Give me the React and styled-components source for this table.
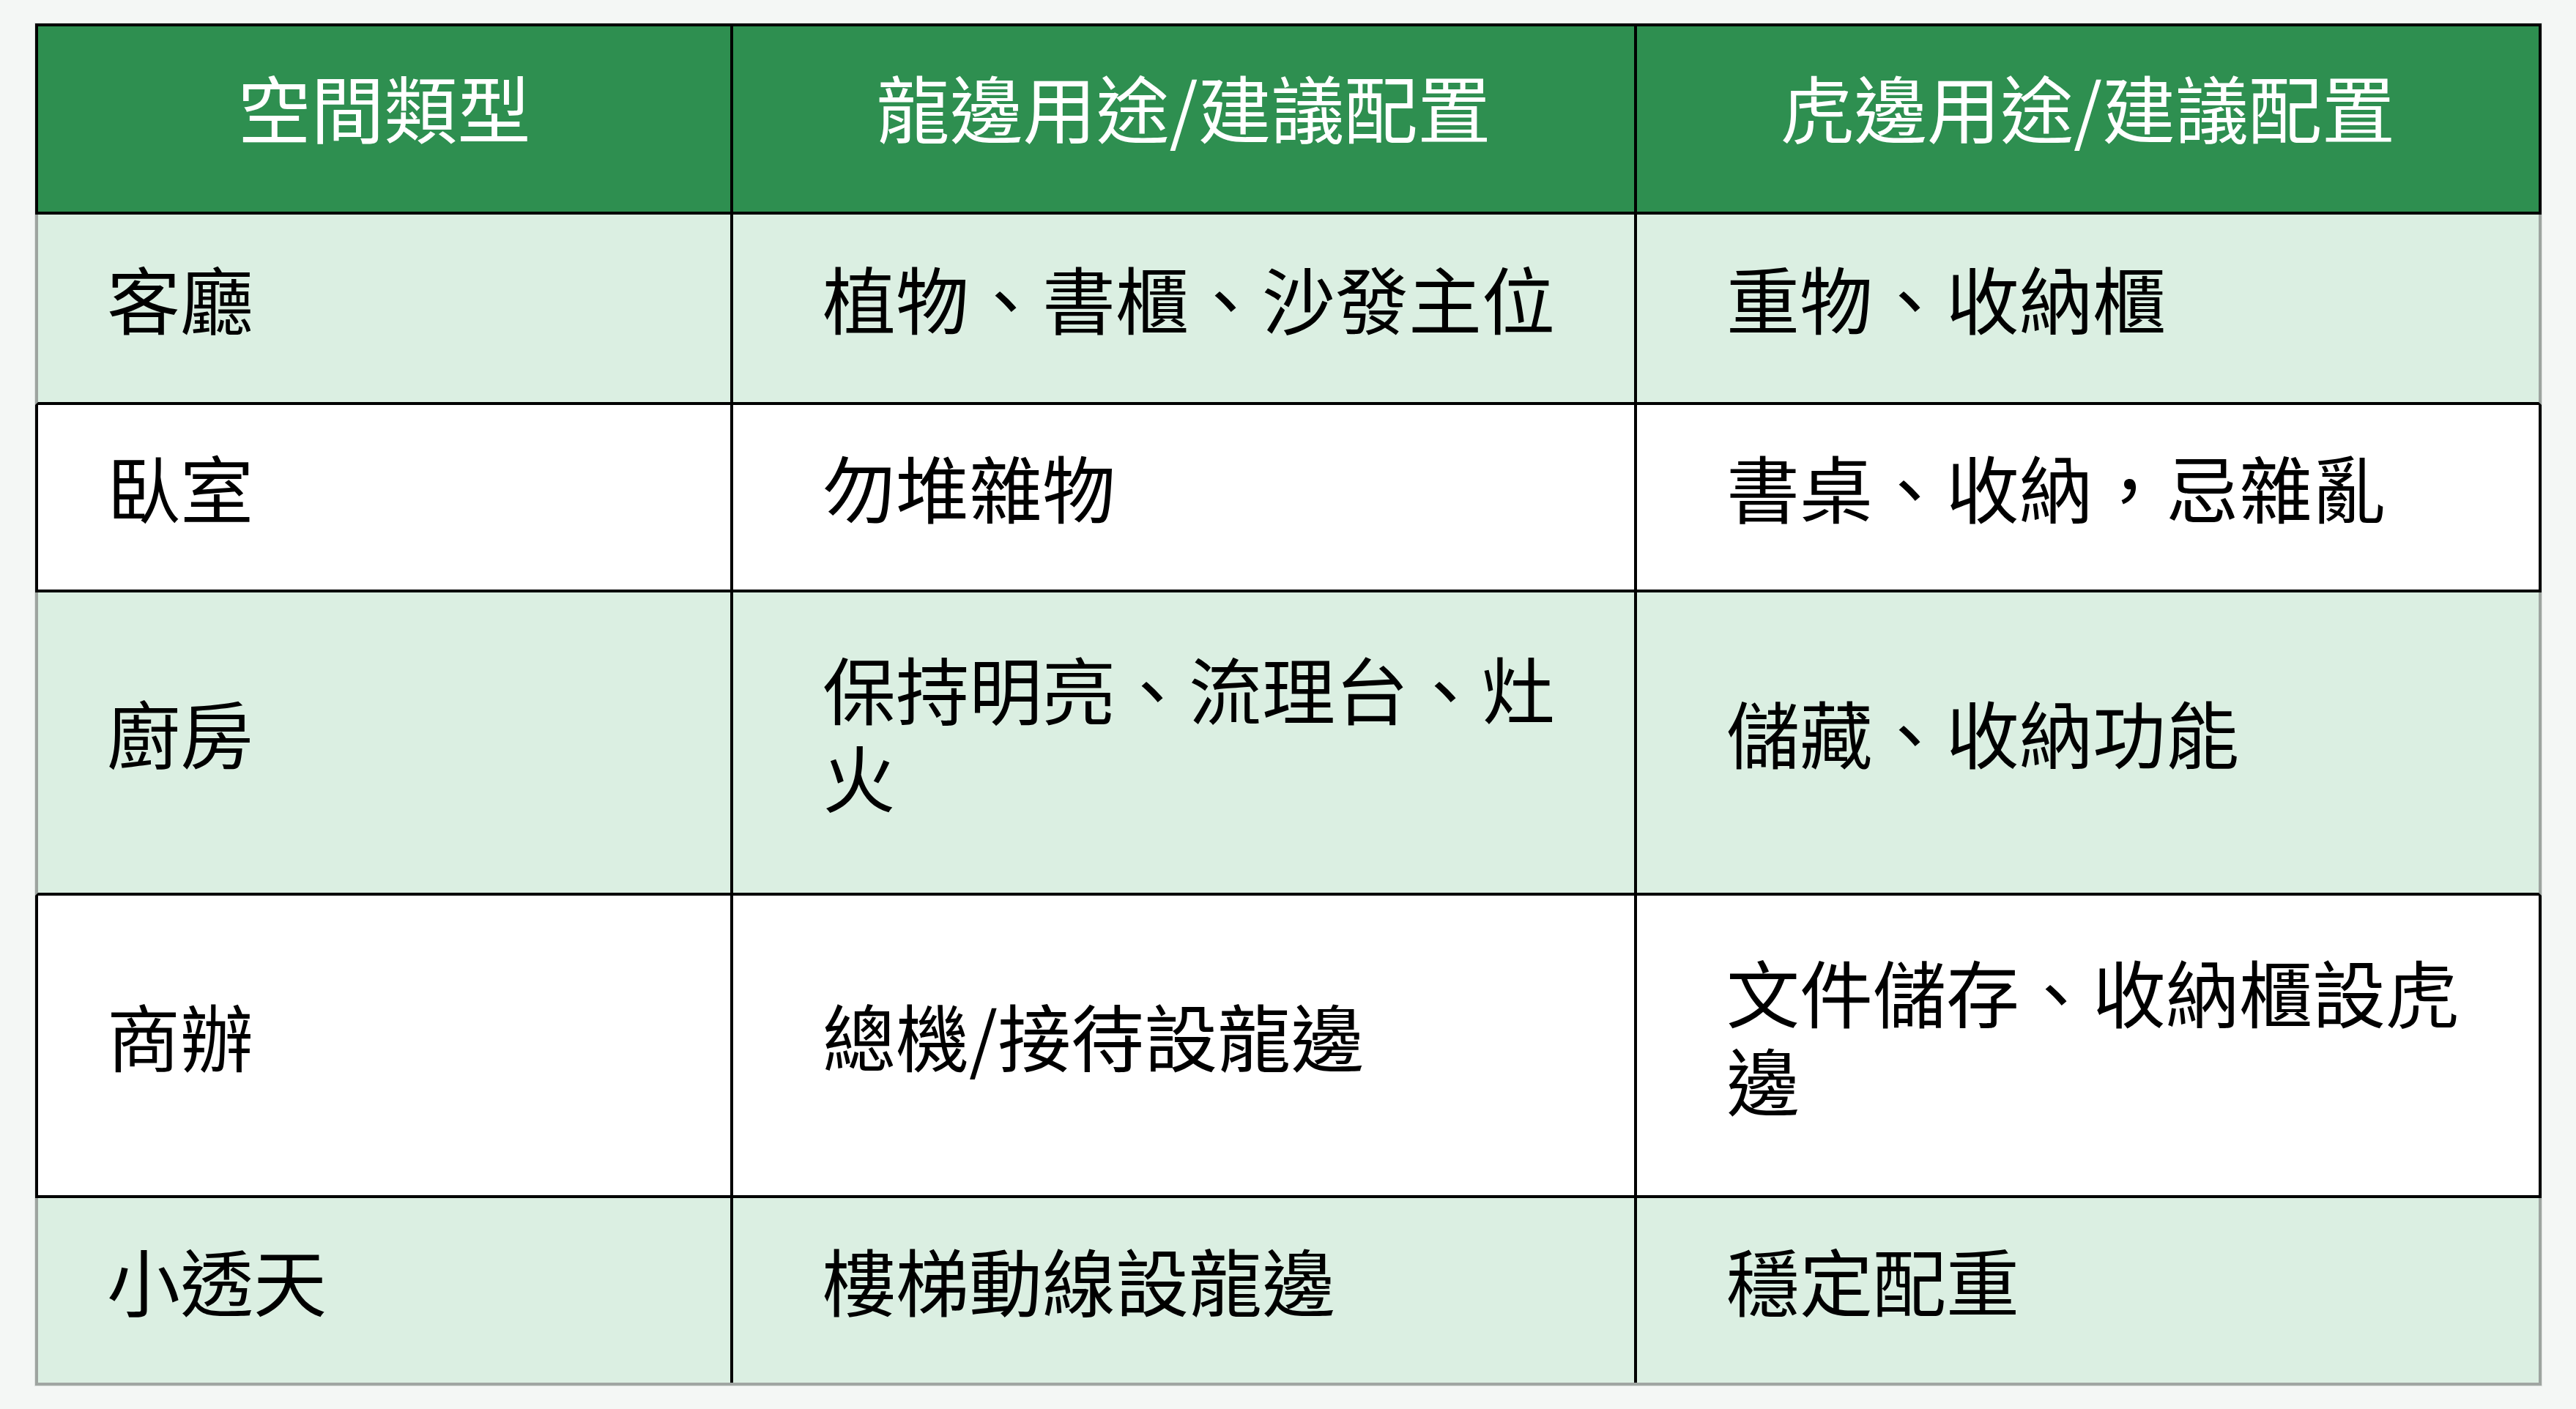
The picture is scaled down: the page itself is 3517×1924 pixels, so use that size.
import React from "react";
import styled, { createGlobalStyle, css } from "styled-components";

const GlobalStyle = createGlobalStyle`
  html, body {
    margin: 0;
    padding: 0;
    background: #f4f7f5;
  }
  * { box-sizing: border-box; }
`;

const Page = styled.div`
  padding: 32px 0 0 48px;
  min-height: 1924px;
  background: #f4f7f5;
`;

const Table = styled.div`
  width: 3422px;
  display: flex;
  flex-direction: column;
  border-top: 4px solid #000;
  box-shadow: 0 0 0 1px #dde2df;
  font-family: "Noto Sans CJK TC", "Noto Sans CJK SC", "Noto Sans", sans-serif;
  font-size: 100px;
  line-height: 1.2;
`;

const tones = {
  head: { bg: "#2e8f50", outer: "#000", inner: "#000", color: "#fff" },
  green: { bg: "#dbefe2", outer: "#9da49f", inner: "#78807a", color: "#000" },
  white: { bg: "#ffffff", outer: "#000", inner: "#000", color: "#000" },
};

const Row = styled.div`
  display: grid;
  grid-template-columns: 945px 1234px 1235px;
  background: ${(p) => tones[p.$tone].bg};
  color: ${(p) => tones[p.$tone].color};
  border-left: 4px solid ${(p) => tones[p.$tone].outer};
  border-right: 4px solid ${(p) => tones[p.$tone].outer};
  border-bottom: 4px solid ${(p) => (p.$last ? "#a0a6a2" : "#000")};
`;

const Cell = styled.div`
  display: flex;
  align-items: center;
  padding: 0 60px 30px ${(p) => p.$pl}px;
  font-weight: 400;
  word-break: break-all;
  & + & {
    border-left: 4px solid ${(p) => tones[p.$tone].inner};
  }
  ${(p) =>
    p.$center &&
    css`
      justify-content: center;
      text-align: center;
      padding: 0 0 36px 0;
    `}
`;

const headers = ["空間類型", "龍邊用途/建議配置", "虎邊用途/建議配置"];

const rows = [
  { h: 260, tone: "green", cells: ["客廳", "植物、書櫃、沙發主位", "重物、收納櫃"] },
  { h: 256, tone: "white", cells: ["臥室", "勿堆雜物", "書桌、收納，忌雜亂"] },
  { h: 414, tone: "green", cells: ["廚房", "保持明亮、流理台、灶火", "儲藏、收納功能"] },
  { h: 413, tone: "white", cells: ["商辦", "總機/接待設龍邊", "文件儲存、收納櫃設虎邊"] },
  { h: 256, tone: "green", cells: ["小透天", "樓梯動線設龍邊", "穩定配重"] },
];

const pads = [94, 122, 122];

export default function App() {
  return (
    <>
      <GlobalStyle />
      <Page>
        <Table>
          <Row $tone="head" style={{ height: 257 }}>
            {headers.map((t) => (
              <Cell key={t} $tone="head" $center>
                {t}
              </Cell>
            ))}
          </Row>
          {rows.map((r, i) => (
            <Row key={i} $tone={r.tone} $last={i === rows.length - 1} style={{ height: r.h }}>
              {r.cells.map((t, j) => (
                <Cell key={j} $tone={r.tone} $pl={pads[j]}>
                  {t}
                </Cell>
              ))}
            </Row>
          ))}
        </Table>
      </Page>
    </>
  );
}
